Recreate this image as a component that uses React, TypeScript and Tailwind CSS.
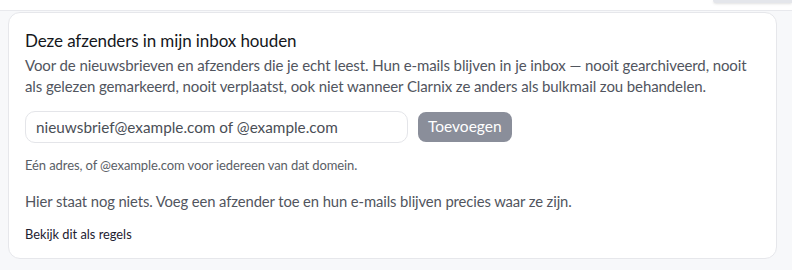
import React from "react";

const font = { fontFamily: "Lato, 'Noto Sans', sans-serif" };

export default function App() {
  const [value, setValue] = React.useState("");

  return (
    <div className="min-h-[270px] w-[792px] bg-[#f7f8fa] text-gray-900" style={font}>
      <div className="flex h-[11px] justify-end border-b border-[#e8e9ed] bg-white">
        <div className="h-[3px] w-[79px] rounded-bl-md bg-[#e4e6eb] shadow-sm" />
      </div>
      <div className="px-2 pt-px">
        <section className="w-[769px] rounded-[12px] border border-[#e6e7eb] bg-white px-4 pb-[16px] pt-[17px]">
          <h2 className="text-[17px] leading-[22px] font-normal tracking-[-0.1px] text-[#15171c]">
            Deze afzenders in mijn inbox houden
          </h2>
          <p className="mt-[3px] text-[15px] leading-[21px] tracking-[-0.1px] text-[#51555e]">
            Voor de nieuwsbrieven en afzenders die je echt leest. Hun e-mails blijven in je inbox — nooit gearchiveerd, nooit
            als gelezen gemarkeerd, nooit verplaatst, ook niet wanneer Clarnix ze anders als bulkmail zou behandelen.
          </p>
          <div className="mt-[14px] flex items-center gap-[10px]">
            <input
              value={value}
              onChange={(e) => setValue(e.target.value)}
              placeholder="nieuwsbrief@example.com of @example.com"
              className="h-[32px] w-[383px] rounded-[10px] border border-[#e4e5e9] px-[10px] text-[15.3px] text-[#3a3d44] outline-none placeholder:text-[#4a4e56]"
              style={font}
            />
            <button
              disabled
              className="h-[30px] rounded-[8px] bg-[#8a8e9a] px-[10px] text-[15.5px] text-white"
            >
              Toevoegen
            </button>
          </div>
          <p className="mt-[14px] text-[13px] leading-[16px] tracking-[-0.1px] text-[#5a5e66]">
            Eén adres, of @example.com voor iedereen van dat domein.
          </p>
          <p className="mt-[18px] text-[14.8px] leading-[20px] tracking-[-0.1px] text-[#51555e]">
            Hier staat nog niets. Voeg een afzender toe en hun e-mails blijven precies waar ze zijn.
          </p>
          <button className="mt-[15px] block text-[12.8px] leading-[16px] text-[#1d2130]">
            Bekijk dit als regels
          </button>
        </section>
      </div>
    </div>
  );
}
